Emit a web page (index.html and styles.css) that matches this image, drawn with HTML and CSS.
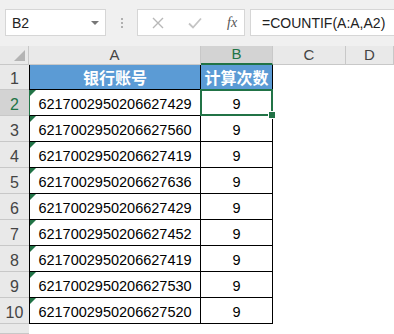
FILE: index.html
```html
<!DOCTYPE html>
<html lang="zh-CN">
<head>
    <meta charset="UTF-8">
    <meta name="viewport" content="width=device-width, initial-scale=1.0">
    <title>COUNTIF</title>
    <link rel="stylesheet" href="styles.css">
</head>
<body>
    <div class="toolbar">
        <div class="name-box">
            <span>B2</span>
            <span class="caret"></span>
        </div>
        <div class="grip">
            <i></i><i></i><i></i>
        </div>
        <div class="fx-buttons">
            <svg class="btn-icon" width="14" height="14" viewBox="0 0 14 14">
                <path d="M2 2 L12 12 M12 2 L2 12" stroke="#b8b8b8" stroke-width="1.4" fill="none"/>
            </svg>
            <svg class="btn-icon" width="16" height="14" viewBox="0 0 16 14">
                <path d="M2 7.5 L6 11.5 L14 2.5" stroke="#c4c4c4" stroke-width="1.8" fill="none"/>
            </svg>
            <span class="fx">fx</span>
        </div>
        <div class="formula">=COUNTIF(A:A,A2)</div>
    </div>

    <div class="sheet">
        <div class="corner"></div>
        <div class="col-head">A</div>
        <div class="col-head active">B</div>
        <div class="col-head">C</div>
        <div class="col-head">D</div>

        <div class="row-head">1</div>
        <div class="cell title first">银行账号</div>
        <div class="cell title">计算次数</div>
        <div class="empty"></div>
        <div class="empty"></div>

        <div class="row-head active">2</div>
        <div class="cell first text">6217002950206627429</div>
        <div class="cell selected">9</div>
        <div class="empty"></div>
        <div class="empty"></div>

        <div class="row-head">3</div>
        <div class="cell first text">6217002950206627560</div>
        <div class="cell">9</div>
        <div class="empty"></div>
        <div class="empty"></div>

        <div class="row-head">4</div>
        <div class="cell first text">6217002950206627419</div>
        <div class="cell">9</div>
        <div class="empty"></div>
        <div class="empty"></div>

        <div class="row-head">5</div>
        <div class="cell first text">6217002950206627636</div>
        <div class="cell">9</div>
        <div class="empty"></div>
        <div class="empty"></div>

        <div class="row-head">6</div>
        <div class="cell first text">6217002950206627429</div>
        <div class="cell">9</div>
        <div class="empty"></div>
        <div class="empty"></div>

        <div class="row-head">7</div>
        <div class="cell first text">6217002950206627452</div>
        <div class="cell">9</div>
        <div class="empty"></div>
        <div class="empty"></div>

        <div class="row-head">8</div>
        <div class="cell first text">6217002950206627419</div>
        <div class="cell">9</div>
        <div class="empty"></div>
        <div class="empty"></div>

        <div class="row-head">9</div>
        <div class="cell first text">6217002950206627530</div>
        <div class="cell">9</div>
        <div class="empty"></div>
        <div class="empty"></div>

        <div class="row-head">10</div>
        <div class="cell first text">6217002950206627520</div>
        <div class="cell">9</div>
        <div class="empty"></div>
        <div class="empty"></div>

        <div class="row-head"></div>
        <div class="empty"></div>
        <div class="empty"></div>
        <div class="empty"></div>
        <div class="empty"></div>
    </div>
</body>
</html>
```

FILE: styles.css
```css
body {
    margin: 0;
    width: 394px;
    height: 334px;
    overflow: hidden;
    background: #fff;
    font-family: "Liberation Sans", Arial, "Noto Sans CJK SC", sans-serif;
    color: #000;
}

/* formula bar */

.toolbar {
    display: flex;
    align-items: flex-start;
    height: 46px;
    padding-top: 9px;
    padding-left: 5px;
    box-sizing: border-box;
    background: #f0f0f0;
}

.name-box {
    width: 101px;
    height: 27px;
    box-sizing: border-box;
    background: #fff;
    border: 1px solid #d6d6d6;
    display: flex;
    align-items: center;
    justify-content: space-between;
    padding: 0 6px 0 6px;
    font-size: 14px;
    color: #222;
}

.caret {
    width: 0;
    height: 0;
    border-left: 4px solid transparent;
    border-right: 4px solid transparent;
    border-top: 4px solid #777;
}

.grip {
    width: 31px;
    height: 27px;
    display: flex;
    flex-direction: column;
    align-items: center;
    justify-content: center;
    gap: 2px;
}

.grip i {
    width: 2px;
    height: 2px;
    background: #b0b0b0;
}

.fx-buttons {
    width: 108px;
    height: 27px;
    box-sizing: border-box;
    background: #fff;
    border: 1px solid #d6d6d6;
    display: flex;
    align-items: center;
    padding-left: 13px;
    gap: 22px;
}

.fx {
    font-family: "Liberation Serif", "Times New Roman", serif;
    font-style: italic;
    font-size: 14px;
    color: #555;
    margin-left: 2px;
}

.formula {
    flex: 1;
    margin-left: 5px;
    height: 27px;
    box-sizing: border-box;
    background: #fff;
    border: 1px solid #d6d6d6;
    border-right: none;
    padding-left: 11px;
    display: flex;
    align-items: center;
    font-size: 14px;
    color: #222;
}

/* worksheet */

.sheet {
    display: grid;
    grid-template-columns: 29px 172px 72px 73px 1fr;
    grid-template-rows: 19px 25px repeat(9, 26px) 1fr;
    height: 288px;
}

.corner,
.col-head,
.row-head {
    background: #e9e9e9;
    box-sizing: border-box;
    color: #444;
}

.corner {
    position: relative;
    border-right: 1px solid #c8c8c8;
    border-bottom: 1px solid #c8c8c8;
}

.corner::after {
    content: "";
    position: absolute;
    right: 3px;
    bottom: 3px;
    border-left: 11px solid transparent;
    border-bottom: 11px solid #b4b4b4;
}

.col-head {
    display: flex;
    justify-content: center;
    align-items: flex-end;
    padding-bottom: 1px;
    font-size: 15px;
    border-right: 1px solid #c8c8c8;
    border-bottom: 1px solid #c8c8c8;
}

.row-head {
    display: flex;
    justify-content: center;
    align-items: flex-end;
    padding-bottom: 1px;
    font-size: 16px;
    border-bottom: 1px solid #c8c8c8;
}

.col-head.active,
.row-head.active {
    background: #d3d3d3;
    color: #217346;
}

.col-head.active {
    border-bottom: 2px solid #217346;
}

.cell {
    display: flex;
    align-items: center;
    justify-content: center;
    box-sizing: border-box;
    border-right: 1px solid #000;
    border-bottom: 1px solid #000;
    font-size: 14.5px;
    padding-top: 2px;
    position: relative;
}

.cell.first {
    border-left: 1px solid #000;
}

.row-head.active + .cell.first {
    border-left-color: #217346;
}

.cell.title {
    background: #5b9bd5;
    color: #fff;
    font-weight: bold;
    font-size: 16px;
    padding-top: 0;
}

/* number-stored-as-text marker */
.cell.text::before {
    content: "";
    position: absolute;
    top: 0;
    left: 0;
    border-top: 6px solid #217346;
    border-right: 6px solid transparent;
}

.cell.selected::after {
    content: "";
    position: absolute;
    top: -1px;
    left: -1px;
    right: -1px;
    bottom: -1px;
    border: 2px solid #217346;
}

.cell.selected::before {
    content: "";
    position: absolute;
    right: -4px;
    bottom: -4px;
    width: 6px;
    height: 6px;
    background: #217346;
    border: 1px solid #fff;
    z-index: 1;
}
```
